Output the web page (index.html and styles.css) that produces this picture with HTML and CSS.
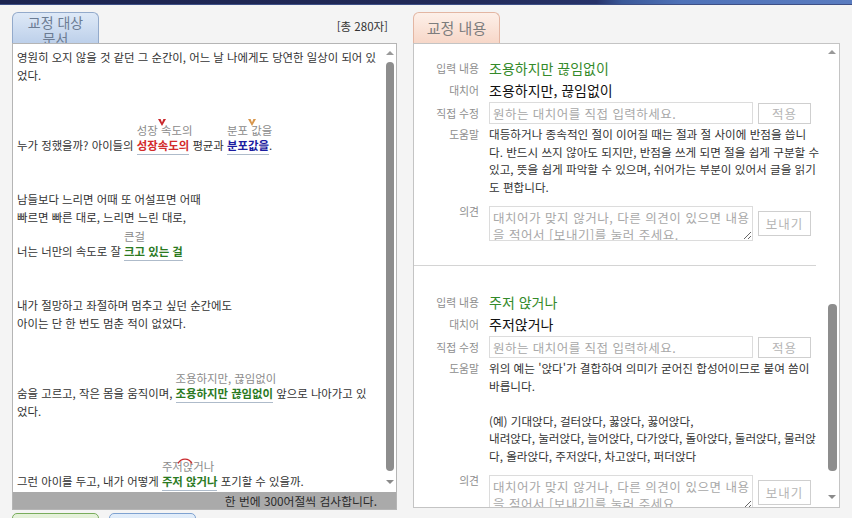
FILE: index.html
```html
<!DOCTYPE html>
<html lang="ko">
<head>
<meta charset="utf-8">
<title>맞춤법 검사</title>
<link rel="stylesheet" href="styles.css">
</head>
<body>
<div class="topbar"></div>
<main class="main">
  <section class="panel panel-doc">
    <div class="tab-row">
      <div class="tab tab-blue">교정 대상<br>문서</div>
      <div class="count">[총 280자]</div>
    </div>
    <div class="box doc-box">
      <div class="doc-area">
        <div class="doc-text">
          <p class="line">영원히 오지 않을 것 같던 그 순간이, 어느 날 나에게도 당연한 일상이 되어 있<br>었다.</p>
          <p class="line blank"></p>
          <p class="line blank"></p>
          <p class="line noted">누가 정했을까? 아이들의 <span class="fix red"><span class="note">성장 속도의<svg class="mark mark-v" viewBox="0 0 8 7"><path d="M0 0H2.6L4 3.6L5.4 0H8L4 7Z" fill="#c9282c"/></svg></span>성장속도의</span> 평균과 <span class="fix blue"><span class="note">분포 값을<svg class="mark mark-v" viewBox="0 0 8 7"><path d="M0 0H2.6L4 3.6L5.4 0H8L4 7Z" fill="#d8964c"/></svg></span>분포값을</span>.</p>
          <p class="line blank"></p>
          <p class="line blank"></p>
          <p class="line">남들보다 느리면 어때 또 어설프면 어때</p>
          <p class="line">빠르면 빠른 대로, 느리면 느린 대로,</p>
          <p class="line noted">너는 너만의 속도로 잘 <span class="fix green"><span class="note">큰걸</span>크고 있는 걸</span></p>
          <p class="line blank"></p>
          <p class="line blank"></p>
          <p class="line">내가 절망하고 좌절하며 멈추고 싶던 순간에도</p>
          <p class="line">아이는 단 한 번도 멈춘 적이 없었다.</p>
          <p class="line blank"></p>
          <p class="line blank"></p>
          <p class="line noted">숨을 고르고, 작은 몸을 움직이며, <span class="fix green"><span class="note">조용하지만, 끊임없이</span>조용하지만 끊임없이</span> 앞으로 나아가고 있<br>었다.</p>
          <p class="line blank"></p>
          <p class="line blank"></p>
          <p class="line noted">그런 아이를 두고, 내가 어떻게 <span class="fix green"><span class="note">주저앉거나<svg class="mark mark-arc" viewBox="0 0 16 7"><path d="M1 6.5C4 0.6 12 0.6 15 6.5" fill="none" stroke="#c9282c" stroke-width="1.4"/></svg></span>주저 앉거나</span> 포기할 수 있을까.</p>
        </div>
        <div class="vscroll vscroll-doc">
          <span class="arrow arrow-up"></span>
          <span class="thumb"></span>
          <span class="arrow arrow-down"></span>
        </div>
      </div>
      <div class="doc-foot">한 번에 300어절씩 검사합니다.</div>
    </div>
    <div class="actions">
      <div class="act act-green"></div>
      <div class="act act-blue"></div>
    </div>
  </section>

  <section class="panel panel-fix">
    <div class="tab-row">
      <div class="tab tab-peach">교정 내용</div>
    </div>
    <div class="box fix-box">
      <div class="fix-list">
        <div class="entry">
          <div class="lbl">입력 내용</div>
          <div class="val val-input">조용하지만 끊임없이</div>
          <div class="lbl">대치어</div>
          <div class="val">조용하지만, 끊임없이</div>
          <div class="lbl">직접 수정</div>
          <div class="ctrl">
            <input class="field" type="text" placeholder="원하는 대치어를 직접 입력하세요.">
            <button class="btn">적용</button>
          </div>
          <div class="lbl lbl-help">도움말</div>
          <div class="help">대등하거나 종속적인 절이 이어질 때는 절과 절 사이에 반점을 씁니<br>다. 반드시 쓰지 않아도 되지만, 반점을 쓰게 되면 절을 쉽게 구분할 수<br>있고, 뜻을 쉽게 파악할 수 있으며, 쉬어가는 부분이 있어서 글을 읽기<br>도 편합니다.</div>
          <div class="lbl lbl-op">의견</div>
          <div class="ctrl ctrl-op">
            <textarea class="memo" placeholder="대치어가 맞지 않거나, 다른 의견이 있으면 내용을 적어서 [보내기]를 눌러 주세요."></textarea>
            <button class="btn btn-send">보내기</button>
          </div>
        </div>
        <div class="entry">
          <div class="lbl">입력 내용</div>
          <div class="val val-input">주저 앉거나</div>
          <div class="lbl">대치어</div>
          <div class="val">주저앉거나</div>
          <div class="lbl">직접 수정</div>
          <div class="ctrl">
            <input class="field" type="text" placeholder="원하는 대치어를 직접 입력하세요.">
            <button class="btn">적용</button>
          </div>
          <div class="lbl lbl-help">도움말</div>
          <div class="help">위의 예는 '앉다'가 결합하여 의미가 굳어진 합성어이므로 붙여 씀이<br>바릅니다.<br><br>(예) 기대앉다, 걸터앉다, 꿇앉다, 꿇어앉다,<br>내려앉다, 눌러앉다, 늘어앉다, 다가앉다, 돌아앉다, 둘러앉다, 물러앉<br>다, 올라앉다, 주저앉다, 차고앉다, 퍼더앉다</div>
          <div class="lbl lbl-op">의견</div>
          <div class="ctrl ctrl-op">
            <textarea class="memo" placeholder="대치어가 맞지 않거나, 다른 의견이 있으면 내용을 적어서 [보내기]를 눌러 주세요."></textarea>
            <button class="btn btn-send">보내기</button>
          </div>
        </div>
      </div>
      <div class="vscroll vscroll-fix">
        <span class="arrow arrow-up"></span>
        <span class="thumb"></span>
        <span class="arrow arrow-down"></span>
      </div>
    </div>
  </section>
</main>
</body>
</html>
```

FILE: styles.css
```css
* { box-sizing: border-box; }

html, body { margin: 0; padding: 0; }

body {
  width: 852px;
  height: 518px;
  overflow: hidden;
  background: #f4f4f4;
  color: #333;
  font-family: "Noto Sans CJK KR", "Noto Sans", sans-serif;
}

.topbar {
  height: 5px;
  background: linear-gradient(to right, #1c2450 0%, #222a58 55%, #27336a 70%, #3a5898 73%, #4f72b8 80%, #5a7cc0 100%);
  border-bottom: 1px solid #3d4f86;
}

.main {
  display: flex;
  gap: 16px;
  padding: 7px 0 0 12px;
}

.panel-doc { width: 385px; }
.panel-fix { width: 427px; }

.tab-row {
  display: flex;
  justify-content: space-between;
  height: 31px;
}

.tab {
  width: 87px;
  height: 31px;
  border: 1px solid;
  border-bottom: none;
  border-radius: 6px 6px 0 0;
  text-align: center;
  overflow: hidden;
}

.tab-blue {
  background: linear-gradient(#dee9f7, #bdd0ea);
  border-color: #93aacb;
  color: #6c7c93;
  font-size: 14px;
  line-height: 16px;
  padding-top: 1px;
}

.tab-peach {
  background: linear-gradient(#fdf0e9, #f7d7c8);
  border-color: #e3b6a3;
  color: #7d7d7d;
  font-size: 15px;
  line-height: 29px;
}

.count {
  align-self: flex-start;
  margin: 6px 9px 0 0;
  font-size: 11.5px;
  line-height: 16px;
  color: #333;
}

.box {
  background: #fff;
  border: 1px solid #b5b5b5;
  overflow: hidden;
}

.doc-area {
  display: flex;
  height: 448px;
}

.doc-text {
  flex: 1;
  padding: 4px 0 0 4px;
  font-size: 11.4px;
  line-height: 18px;
  white-space: nowrap;
  color: #333;
}

.line { margin: 0; }
.blank { height: 18px; }
.noted { padding-top: 16px; }

.fix {
  position: relative;
  font-weight: bold;
  border-bottom: 1px solid #aebbca;
  padding-bottom: 1px;
}
.red { color: #d22b2b; }
.blue { color: #1c1ca0; }
.green { color: #2b7a1f; }

.note {
  position: absolute;
  left: 0;
  bottom: 100%;
  line-height: 14px;
  font-weight: normal;
  color: #8b8b8b;
  white-space: nowrap;
}

.mark { position: absolute; }
.mark-v { left: 21px; top: -4px; width: 8px; height: 7px; }
.mark-arc { left: 15px; top: -2px; width: 16px; height: 7px; }

.vscroll {
  display: flex;
  flex-direction: column;
  align-items: center;
  flex: none;
}

.arrow {
  width: 0;
  height: 0;
  border-left: 4px solid transparent;
  border-right: 4px solid transparent;
}
.arrow-up { border-bottom: 4px solid #999; }
.arrow-down { border-top: 4px solid #8a8a8a; }

.thumb {
  background: #8d8d8d;
  border-radius: 4px;
}

.vscroll-doc { width: 13px; padding-top: 7px; }
.vscroll-doc .thumb { width: 8px; height: 409px; margin-top: 7px; }
.vscroll-doc .arrow-down { margin-top: 9px; }

.doc-foot {
  height: 17px;
  background: #aaaaaa;
  font-size: 11.8px;
  line-height: 17px;
  text-align: right;
  padding-right: 19px;
  color: #2a2a2a;
}

.actions {
  display: flex;
  gap: 10px;
  margin-top: 3px;
}
.act {
  width: 87px;
  height: 30px;
  border-radius: 5px 5px 0 0;
}
.act-green {
  background: linear-gradient(#e6f2dc, #cfe6bd);
  border: 1px solid #79ad5c;
}
.act-blue {
  background: linear-gradient(#e3eefa, #c9dcf2);
  border: 1px solid #7ea2d1;
}

.fix-box {
  display: flex;
  height: 465px;
  border-color: #c4c4c4;
}

.fix-list {
  width: 402px;
  margin-right: 9px;
  flex: none;
}

.entry {
  display: grid;
  grid-template-columns: 65px 1fr;
  column-gap: 10px;
  row-gap: 2px;
  align-items: center;
  padding: 26px 0 24px;
  border-bottom: 1px solid #d4d4d4;
}
.entry:first-child { padding-top: 14px; }

.lbl {
  text-align: right;
  font-size: 10.8px;
  color: #8e8e8e;
  line-height: 14px;
}
.lbl-help { align-self: start; line-height: 17.5px; }
.lbl-op { align-self: start; line-height: 10px; margin-top: 8px; }

.val {
  font-size: 14px;
  line-height: 20px;
  color: #111;
}
.val-input { color: #348a2a; }

.ctrl {
  display: flex;
  align-items: center;
  gap: 5px;
}
.ctrl-op { margin-top: 8px; }

.field {
  width: 264px;
  height: 22px;
  border: 1px solid #dcdcdc;
  padding: 0 3px;
  margin: 0;
  background: #fff;
  font-family: inherit;
  font-size: 12.5px;
  letter-spacing: 0.45px;
  color: #333;
  outline: none;
}
.field::placeholder { color: #a8a8a8; }

.memo {
  width: 264px;
  height: 35px;
  border: 1px solid #dcdcdc;
  padding: 2px 0 0 3px;
  margin: 0;
  background: #fff;
  font-family: inherit;
  font-size: 12.5px;
  line-height: 17px;
  letter-spacing: 0.52px;
  color: #333;
  overflow: hidden;
  resize: both;
  outline: none;
}
.memo::placeholder { color: #a8a8a8; }

.btn {
  width: 53px;
  height: 21px;
  padding: 0;
  border: 1px solid #cfcfcf;
  background: #fff;
  color: #b5b5b5;
  font-family: inherit;
  font-size: 12.5px;
  letter-spacing: 1px;
}
.btn-send { height: 25px; }

.help {
  font-size: 11.6px;
  line-height: 17.5px;
  white-space: nowrap;
  color: #333;
}

.vscroll-fix { width: 14px; padding-top: 6px; }
.vscroll-fix .thumb { width: 9px; height: 167px; margin-top: 250px; }
.vscroll-fix .arrow-down { margin-top: 24px; }
```
